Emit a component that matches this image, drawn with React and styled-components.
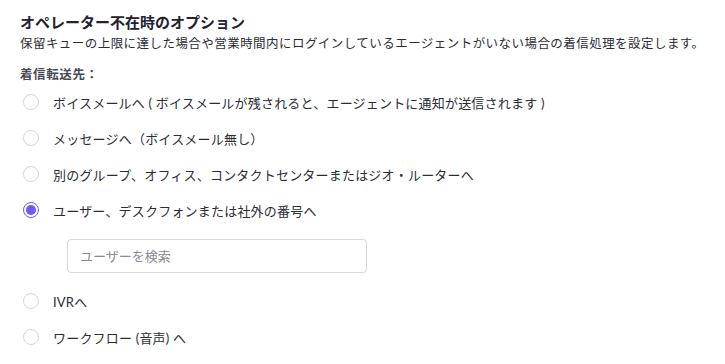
import styled, { createGlobalStyle } from "styled-components";

const GlobalStyle = createGlobalStyle`
  body {
    margin: 0;
    background: #fff;
    font-family: "Lato", "Noto Sans CJK JP", sans-serif;
    color: #222230;
  }
`;

const Section = styled.section`
  padding: 11px 20px 0 20px;
`;

const Title = styled.h2`
  margin: 0;
  font-size: 15px;
  font-weight: 700;
  line-height: 22px;
  color: #222230;
`;

const Description = styled.p`
  margin: 1px 0 0 0;
  font-size: 12.5px;
  line-height: 20px;
  color: #2c2c36;
  letter-spacing: 0.45px;
`;

const Label = styled.div`
  margin-top: 11px;
  font-size: 12.5px;
  font-weight: 700;
  line-height: 20px;
  color: #4a4a55;
  letter-spacing: 0.6px;
`;

const Options = styled.div`
  display: flex;
  flex-direction: column;
  margin-top: -1px;
`;

const Option = styled.label`
  display: flex;
  align-items: center;
  gap: 14px;
  height: 36px;
  font-size: 13px;
  color: #2c2c36;
  letter-spacing: 0.2px;
  cursor: pointer;
`;

const Radio = styled.span`
  width: 16px;
  height: 16px;
  box-sizing: border-box;
  border-radius: 50%;
  border: 1px solid ${(p) => (p.$checked ? "#6e5bf0" : "#d6d4dc")};
  display: flex;
  align-items: center;
  justify-content: center;
  flex-shrink: 0;
  margin-left: 3px;

  &::after {
    content: "";
    width: 10px;
    height: 10px;
    border-radius: 50%;
    background: #6e5bf0;
    display: ${(p) => (p.$checked ? "block" : "none")};
  }
`;

const SearchWrap = styled.div`
  padding: 11px 0 10px 47px;
`;

const SearchInput = styled.input`
  width: 300px;
  height: 34px;
  box-sizing: border-box;
  border: 1px solid #d8d8dd;
  border-radius: 4px;
  padding: 0 12px;
  font-family: inherit;
  font-size: 13px;
  color: #2c2c36;
  outline: none;

  &::placeholder {
    color: #8a8a93;
  }
`;

const options = [
  { id: "vm", text: "ボイスメールへ ( ボイスメールが残されると、エージェントに通知が送信されます )" },
  { id: "msg", text: "メッセージへ（ボイスメール無し）" },
  { id: "group", text: "別のグループ、オフィス、コンタクトセンターまたはジオ・ルーターへ" },
  { id: "user", text: "ユーザー、デスクフォンまたは社外の番号へ", checked: true, search: true },
  { id: "ivr", text: "IVRへ" },
  { id: "wf", text: "ワークフロー (音声) へ" },
];

export default function App() {
  return (
    <>
      <GlobalStyle />
      <Section>
        <Title>オペレーター不在時のオプション</Title>
        <Description>
          保留キューの上限に達した場合や営業時間内にログインしているエージェントがいない場合の着信処理を設定します。
        </Description>
        <Label>着信転送先：</Label>
        <Options>
          {options.map((o) => (
            <div key={o.id}>
              <Option>
                <Radio $checked={o.checked} />
                {o.text}
              </Option>
              {o.search && (
                <SearchWrap>
                  <SearchInput placeholder="ユーザーを検索" />
                </SearchWrap>
              )}
            </div>
          ))}
        </Options>
      </Section>
    </>
  );
}
